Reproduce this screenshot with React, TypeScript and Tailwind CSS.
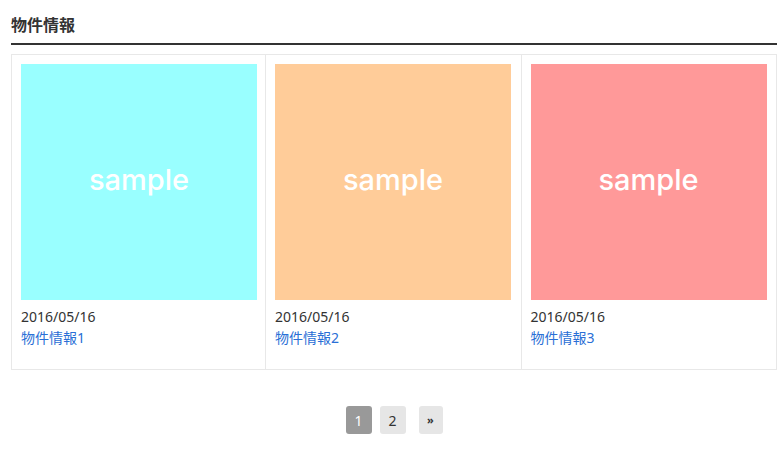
const items = [
  { id: 1, date: "2016/05/16", title: "物件情報1", color: "bg-[#99ffff]" },
  { id: 2, date: "2016/05/16", title: "物件情報2", color: "bg-[#ffcc99]" },
  { id: 3, date: "2016/05/16", title: "物件情報3", color: "bg-[#ff9999]" },
];

const font = { fontFamily: '"Noto Sans", "Noto Sans CJK JP", sans-serif' };
const sampleFont = { fontFamily: "Inter, sans-serif" };

export default function App() {
  return (
    <div style={font} className="min-h-[460px] w-[780px] bg-white pl-[11px] pt-[14px] text-[#333]">
      <h2 className="w-[766px] border-b-2 border-[#333] pb-[7px] text-[16px] font-bold leading-[22px]">
        物件情報
      </h2>

      <div className="mt-[9px] grid w-[766px] grid-cols-[253px_1fr_1fr] border border-[#e8e8e8]">
        {items.map((item, i) => (
          <div key={item.id} className={`px-[9px] pt-[9px] pb-[21px] ${i > 0 ? "border-l border-[#e8e8e8]" : ""}`}>
            <div className={`flex h-[236px] w-[236px] items-center justify-center pb-[6px] ${item.color}`}>
              <span style={sampleFont} className="text-[29px] font-medium leading-none text-white">sample</span>
            </div>
            <div className="mt-[6px] text-[14px] leading-[21px]">{item.date}</div>
            <a href="#" className="block text-[14px] leading-[21px] text-[#2a6fd6]">
              {item.title}
            </a>
          </div>
        ))}
      </div>

      <div className="mt-[36px] flex w-[766px] justify-center gap-[8px]">
        <span className="flex h-[28px] w-[26px] items-center justify-center rounded-[3px] bg-[#999] text-[14px] text-white">1</span>
        <span className="flex h-[28px] w-[26px] items-center justify-center rounded-[3px] bg-[#e6e6e6] text-[14px] text-[#333]">2</span>
        <span className="ml-[5px] flex h-[28px] w-[24px] items-center justify-center rounded-[3px] bg-[#e6e6e6] text-[11px] font-bold text-[#333]">»</span>
      </div>
    </div>
  );
}
